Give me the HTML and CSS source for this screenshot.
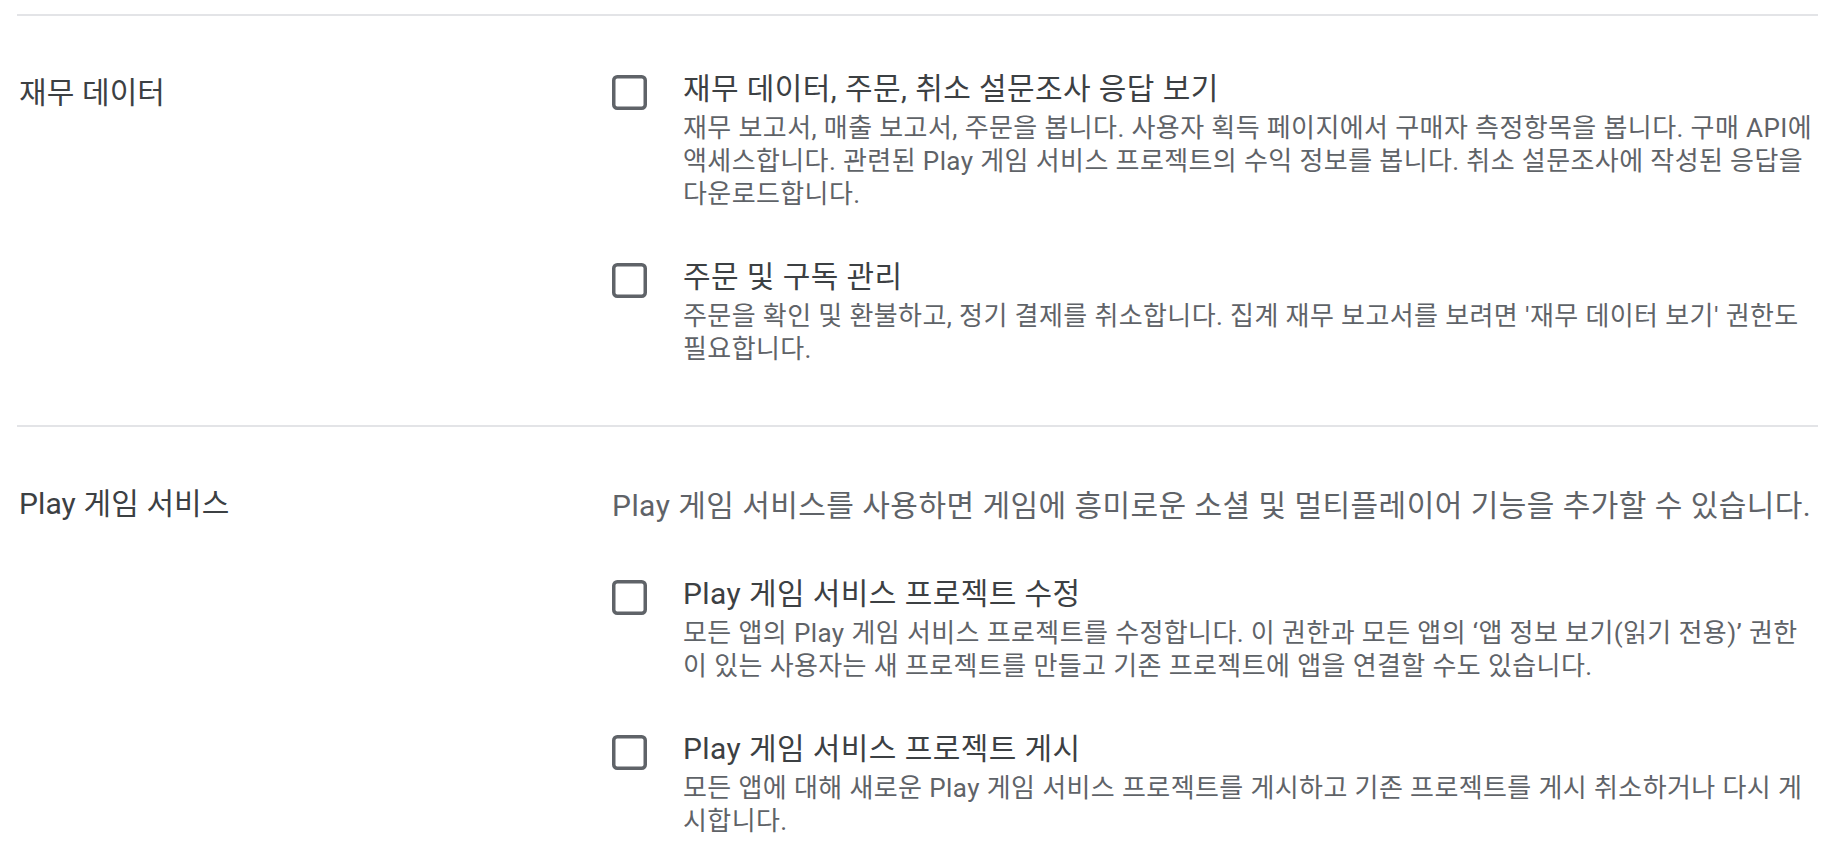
FILE: index.html
```html
<!DOCTYPE html>
<html lang="ko">
<head>
<meta charset="utf-8">
<title>권한</title>
<link rel="stylesheet" href="styles.css">
</head>
<body>
<div class="page">
  <div class="divider"></div>
  <section class="section">
    <div class="label">재무 데이터</div>
    <div class="content">
      <div class="perm">
        <span class="checkbox"><svg width="35" height="35" viewBox="0 0 35 35"><rect x="1.75" y="1.75" width="31.5" height="31.5" rx="3.5" fill="none" stroke="#5f6368" stroke-width="3.5"/></svg></span>
        <div class="perm-text">
          <div class="perm-title">재무 데이터, 주문, 취소 설문조사 응답 보기</div>
          <div class="perm-desc">재무 보고서, 매출 보고서, 주문을 봅니다. 사용자 획득 페이지에서 구매자 측정항목을 봅니다. 구매 API에 액세스합니다. 관련된 Play 게임 서비스 프로젝트의 수익 정보를 봅니다. 취소 설문조사에 작성된 응답을 다운로드합니다.</div>
        </div>
      </div>
      <div class="perm">
        <span class="checkbox"><svg width="35" height="35" viewBox="0 0 35 35"><rect x="1.75" y="1.75" width="31.5" height="31.5" rx="3.5" fill="none" stroke="#5f6368" stroke-width="3.5"/></svg></span>
        <div class="perm-text">
          <div class="perm-title">주문 및 구독 관리</div>
          <div class="perm-desc">주문을 확인 및 환불하고, 정기 결제를 취소합니다. 집계 재무 보고서를 보려면 '재무 데이터 보기' 권한도 필요합니다.</div>
        </div>
      </div>
    </div>
  </section>
  <div class="divider"></div>
  <section class="section section-last">
    <div class="label">Play 게임 서비스</div>
    <div class="content">
      <p class="intro">Play 게임 서비스를 사용하면 게임에 흥미로운 소셜 및 멀티플레이어 기능을 추가할 수 있습니다.</p>
      <div class="perm">
        <span class="checkbox"><svg width="35" height="35" viewBox="0 0 35 35"><rect x="1.75" y="1.75" width="31.5" height="31.5" rx="3.5" fill="none" stroke="#5f6368" stroke-width="3.5"/></svg></span>
        <div class="perm-text">
          <div class="perm-title">Play 게임 서비스 프로젝트 수정</div>
          <div class="perm-desc">모든 앱의 Play 게임 서비스 프로젝트를 수정합니다. 이 권한과 모든 앱의 ‘앱 정보 보기(읽기 전용)’ 권한이 있는 사용자는 새 프로젝트를 만들고 기존 프로젝트에 앱을 연결할 수도 있습니다.</div>
        </div>
      </div>
      <div class="perm">
        <span class="checkbox"><svg width="35" height="35" viewBox="0 0 35 35"><rect x="1.75" y="1.75" width="31.5" height="31.5" rx="3.5" fill="none" stroke="#5f6368" stroke-width="3.5"/></svg></span>
        <div class="perm-text">
          <div class="perm-title">Play 게임 서비스 프로젝트 게시</div>
          <div class="perm-desc">모든 앱에 대해 새로운 Play 게임 서비스 프로젝트를 게시하고 기존 프로젝트를 게시 취소하거나 다시 게시합니다.</div>
        </div>
      </div>
    </div>
  </section>
</div>
</body>
</html>
```

FILE: styles.css
```css
* { box-sizing: border-box; }
html, body {
  margin: 0;
  padding: 0;
  background: #ffffff;
}
body {
  font-family: Roboto, "Noto Sans CJK KR", sans-serif;
  color: #3c4043;
  overflow: hidden;
}
.page {
  padding: 14px 17px 0 17px;
}
.divider {
  height: 2px;
  background: #e3e4e7;
}
.section {
  display: grid;
  grid-template-columns: 595px 1fr;
  padding: 52px 0 59px 0;
}
.section-last {
  padding-bottom: 0;
}
.label {
  font-size: 30px;
  line-height: 42px;
  letter-spacing: 0.1px;
  padding-left: 2px;
  margin-top: 4px;
  color: #3c4043;
}
.content {
  display: flex;
  flex-direction: column;
  gap: 46px;
}
.intro {
  margin: 6px 0 0 0;
  font-size: 30px;
  line-height: 42px;
  letter-spacing: 0.45px;
  color: #5f6368;
  white-space: nowrap;
}
.perm {
  display: flex;
  align-items: flex-start;
  gap: 36px;
}
.checkbox {
  flex: none;
  width: 35px;
  height: 35px;
  margin-top: 7px;
  display: block;
}
.checkbox svg { display: block; }
.perm-text {
  flex: none;
  width: 1133px;
}
.perm-title {
  font-size: 30px;
  line-height: 42px;
  letter-spacing: 0.4px;
  color: #3c4043;
}
.perm-desc {
  margin-top: 2px;
  font-size: 26px;
  line-height: 32.75px;
  letter-spacing: 0.4px;
  color: #5f6368;
}
```
